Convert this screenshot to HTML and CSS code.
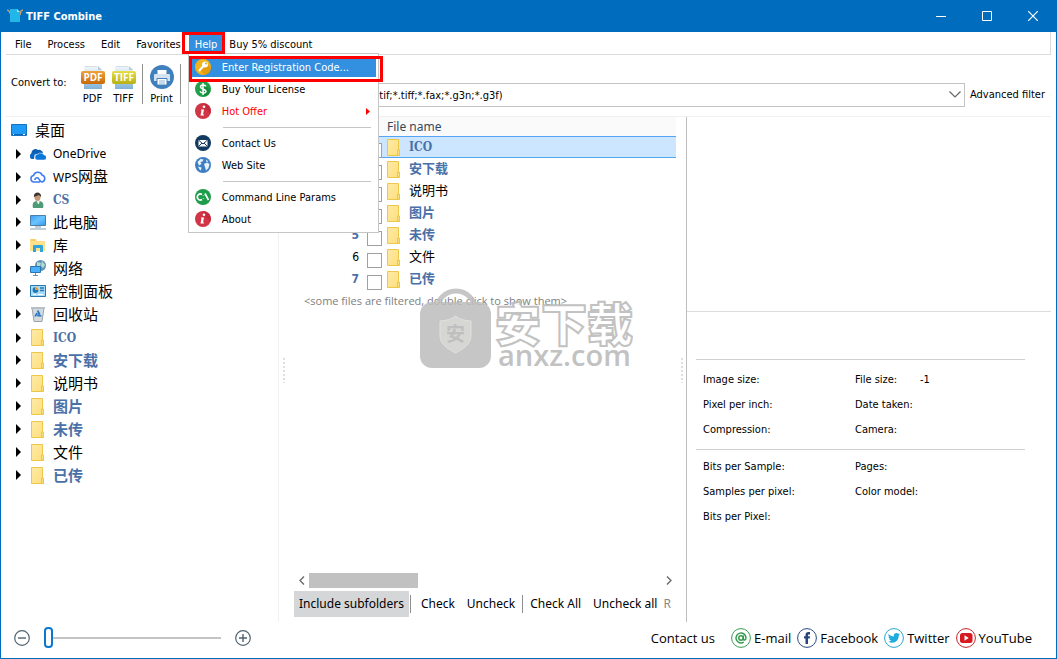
FILE: index.html
```
<!DOCTYPE html>
<html lang="en">
<head>
<meta charset="utf-8">
<title>TIFF Combine</title>
<link rel="stylesheet" href="styles.css">
</head>
<body>
<svg class="defs" aria-hidden="true">
  <defs>
    <linearGradient id="g-folder" x1="0" y1="0" x2="1" y2="1"><stop offset="0" stop-color="#ffeaa6"/><stop offset="1" stop-color="#fddf7c"/></linearGradient>
    <linearGradient id="g-screen" x1="0" y1="0" x2="1" y2="1"><stop offset="0" stop-color="#3a9cf5"/><stop offset=".5" stop-color="#6cc4ff"/><stop offset="1" stop-color="#2f98ee"/></linearGradient>
    <linearGradient id="g-orange" x1="0" y1="0" x2="0" y2="1"><stop offset="0" stop-color="#f0a13a"/><stop offset="1" stop-color="#c86a08"/></linearGradient>
    <linearGradient id="g-yellow" x1="0" y1="0" x2="0" y2="1"><stop offset="0" stop-color="#e6de4a"/><stop offset="1" stop-color="#b9b014"/></linearGradient>
    <linearGradient id="g-page" x1="0" y1="0" x2="0" y2="1"><stop offset="0" stop-color="#f4f8fb"/><stop offset="1" stop-color="#7fb2d6"/></linearGradient>
    <symbol id="folder" viewBox="0 0 14 17"><path d="M.5.5h11v12h1v4H.5z" fill="url(#g-folder)" stroke="#ecc748"/><path d="M10.500 16v-5h2v5z" fill="#fbe07e" stroke="#ecc748"/></symbol>
    <symbol id="info" viewBox="0 0 16 16"><circle cx="8" cy="8" r="8" fill="#d23545"/><path d="M8 0a8 8 0 0 1 7.500 10.500L8.500 4z" fill="#b92536" opacity=".6"/><circle cx="9" cy="3.800" r="1.300" fill="#fff"/><path d="M6 6.500h3l-1 5h1v1H5.500l1-5H6z" fill="#fff"/></symbol>
  </defs>
</svg>
<div class="window">
  <header class="titlebar">
    <svg class="app-icon" width="16" height="16" viewBox="0 0 16 16"><path d="M0 2l2 1 2 4M16 2l-2 1-1 4" stroke="#c79a6a" stroke-width="1.500" fill="none"/><path d="M3 1h7l3 3v10H3z" fill="#22b7e8"/><path d="M10 1v3h3z" fill="#a6e6fa"/></svg>
    <h1 class="title">TIFF Combine</h1>
    <div class="window-buttons">
      <button class="window-button" aria-label="Minimize"><svg width="10" height="10"><path d="M0 5.500h10" stroke="#fff"/></svg></button>
      <button class="window-button" aria-label="Maximize"><svg width="10" height="10"><path d="M.5.5h9v9h-9z" stroke="#fff" fill="none"/></svg></button>
      <button class="window-button" aria-label="Close"><svg width="10" height="10"><path d="M0 0l10 10M10 0L0 10" stroke="#fff" stroke-width="1.200"/></svg></button>
    </div>
  </header>

  <nav class="menubar">
    <button class="menu-title">File</button>
    <button class="menu-title">Process</button>
    <button class="menu-title">Edit</button>
    <button class="menu-title">Favorites</button>
    <div class="help">
      <button class="menu-title menu-open">Help</button>
      <div class="help-menu">
        <button class="menu-item menu-item-active"><svg class="item-icon" viewBox="0 0 16 16"><circle cx="8" cy="8" r="8" fill="#f3b31b"/><path d="M12 4l4 5a8 8 0 0 1-6 7l-5-5z" fill="#dc9609" opacity=".7"/><circle cx="10" cy="5.500" r="3" fill="#fff"/><circle cx="11" cy="4.500" r="1" fill="#e6a50f"/><path d="M8.500 7L4 12" stroke="#fff" stroke-width="2"/></svg><span>Enter Registration Code...</span></button>
        <button class="menu-item"><svg class="item-icon" viewBox="0 0 16 16"><circle cx="8" cy="8" r="8" fill="#20a04a"/><path d="M11 4l4.500 6a8 8 0 0 1-6 5.500l-4-4z" fill="#0f8036" opacity=".6"/><path d="M11 5.500C10 3.500 5.500 3.600 5.500 6S11 8 11 10.200 6 12.600 5 10.300M8 2v12" stroke="#fff" stroke-width="1.500" fill="none"/></svg><span>Buy Your License</span></button>
        <button class="menu-item menu-item-hot"><svg class="item-icon"><use href="#info"/></svg><span>Hot Offer</span><svg class="submenu-arrow" width="4" height="7"><path d="M0 0l4 3.500L0 7z" fill="#f00"/></svg></button>
        <hr class="menu-line">
        <button class="menu-item"><svg class="item-icon" viewBox="0 0 16 16"><circle cx="8" cy="8" r="8" fill="#12395f"/><path d="M3.500 5h9v6.500h-9z" fill="#fff"/><path d="M3.500 5L8 9l4.500-4M3.500 11.500L7 8M12.500 11.500L9 8" stroke="#12395f" fill="none"/></svg><span>Contact Us</span></button>
        <button class="menu-item"><svg class="item-icon" viewBox="0 0 16 16"><circle cx="8" cy="8" r="8" fill="#3d7fc4"/><path d="M2.500 5l3-3 3 .5-1 2-2 .5 1 2-2.500 1.500zM9 7l3-1.500 2.500 1.500-1 4-2.500 2.500-1-3.500zM11 2.500l2.500 2-2 .5zM3 9.500l3.500 1-.5 3-1.500-1z" fill="#e8f2fb"/></svg><span>Web Site</span></button>
        <hr class="menu-line">
        <button class="menu-item"><svg class="item-icon" viewBox="0 0 16 16"><circle cx="8" cy="8" r="8" fill="#1d9c49"/><path d="M7 5.500A3 3 0 1 0 7 10.500M8.500 6.500v.5M8.500 9.500v.5M10 4.500l3.500 6.500" stroke="#fff" stroke-width="1.600" fill="none"/></svg><span>Command Line Params</span></button>
        <button class="menu-item"><svg class="item-icon"><use href="#info"/></svg><span>About</span></button>
      </div>
      <div class="mark mark-title"></div>
      <div class="mark mark-item"></div>
    </div>
    <button class="menu-title menu-after">Buy 5% discount</button>
  </nav>

  <div class="toolbar">
    <span class="convert-label">Convert to:</span>
    <button class="tool"><svg width="24" height="26" viewBox="0 0 24 26"><path d="M3 1h14l4 4v19H3z" fill="url(#g-page)"/><path d="M17 1v4h4z" fill="#b8cedd"/><path d="M4 1.500h12" stroke="#d5dde2" /><rect y="6" width="24" height="13" rx="2" fill="url(#g-orange)"/><text class="badge-text" x="12" y="16">PDF</text></svg>PDF</button>
    <button class="tool"><svg width="24" height="26" viewBox="0 0 24 26"><path d="M3 1h14l4 4v19H3z" fill="url(#g-page)"/><path d="M17 1v4h4z" fill="#b8cedd"/><path d="M4 1.500h12" stroke="#d5dde2" /><rect y="6" width="24" height="13" rx="2" fill="url(#g-yellow)"/><text class="badge-text" x="12" y="16">TIFF</text></svg>TIFF</button>
    <span class="tool-line"></span>
    <button class="tool"><svg width="24" height="26" viewBox="0 0 24 26"><circle cx="12" cy="12" r="12" fill="#4080bd"/><path d="M7.500 5h9v5h-9z" fill="#fff"/><path d="M5 9h14a1 1 0 0 1 1 1v6H4v-6a1 1 0 0 1 1-1z" fill="#d5e3f0"/><path d="M7 13.500h10V20H7z" fill="#fff" stroke="#4080bd"/><path d="M9 16h6M9 18h6" stroke="#8fb2d6"/></svg>Print</button>
    <span class="tool-line"></span>
    <select class="filter" aria-label="File filter"><option>All supported files (*.tif;*.tiff;*.fax;*.g3n;*.g3f)</option></select>
    <button class="advanced">Advanced filter</button>
  </div>

  <main class="content">
    <aside class="tree">
      <div class="tree-root"><svg width="16" height="14" viewBox="0 0 16 14"><path d="M.5 1.500h15v11H.5z" fill="#1e9bf7" stroke="#1672c0"/><path d="M1 11.500h14" stroke="#0d63b5"/><path d="M2 11.500h1M12 11.500h2" stroke="#fff"/></svg>桌面</div>
      <div class="tree-row latin"><i class="arrow"></i><svg width="16" height="16" viewBox="0 0 16 16"><path d="M2 9a4 4 0 0 1 6-5 4 4 0 0 1 5 3" fill="#0a5fb4"/><path d="M0 11a3 3 0 0 1 3-4l2-1-1 7H2a2 2 0 0 1-2-2z" fill="#0a66c0"/><path d="M5 11a3 3 0 0 1 3-3 4 4 0 0 1 6 1 2 2 0 0 1 0 5H7a2.500 2.500 0 0 1-2-3z" fill="#0a78d8" stroke="#fff" stroke-width=".5"/></svg>OneDrive</div>
      <div class="tree-row latin"><i class="arrow"></i><svg width="16" height="16" viewBox="0 0 16 16"><path d="M10 13H4a3.300 3.300 0 0 1-.5-6.500A4.500 4.500 0 0 1 12 6a3.600 3.600 0 0 1 0 7c-2 0-2-2-4-4a2 2 0 0 0-3 2" fill="none" stroke="#3d7df0" stroke-width="1.600"/></svg><span>WPS<span class="han">网盘</span></span></div>
      <div class="tree-row slab"><i class="arrow"></i><svg width="16" height="16" viewBox="0 0 16 16"><path d="M3 16c-1-4 0-6 3-7h4c3 1 4 3 3 7z" fill="#4e9b77"/><path d="M6 8h4l-1 4H8z" fill="#e8f1ee"/><ellipse cx="7.500" cy="5" rx="3" ry="4" fill="#c99872"/><path d="M4 5c-1-6 8-6 7 0L9 3z" fill="#3e3630"/></svg>CS</div>
      <div class="tree-row"><i class="arrow"></i><svg width="16" height="16" viewBox="0 0 16 16"><path d="M.5 1.500h15v10H.5z" fill="url(#g-screen)" stroke="#4a7fa8"/><path d="M5 13h6M0 15h16" stroke="#7f9db5" stroke-width="1.200"/></svg>此电脑</div>
      <div class="tree-row"><i class="arrow"></i><svg width="16" height="16" viewBox="0 0 16 16"><path d="M0 2h6l1 2h8v10H0z" fill="#ffe08a"/><path d="M1 3h4" stroke="#e9b84a"/><path d="M3 15V9a1 1 0 0 1 1-1h8a1 1 0 0 1 1 1v6h-3v-4H6v4z" fill="#32a4dc"/></svg>库</div>
      <div class="tree-row"><i class="arrow"></i><svg width="16" height="16" viewBox="0 0 16 16"><circle cx="10.500" cy="5.500" r="5.500" fill="#5f94b8"/><path d="M7 2l4 1-1 3-3 1zM12 1l3 4-2 3-2-2z" fill="#b4dbd0"/><path d="M.5 6.500h10v6H.5z" fill="#48b0fa" stroke="#2c76ad"/><path d="M3 15.500h5M5.500 13v2" stroke="#6990ad"/></svg>网络</div>
      <div class="tree-row"><i class="arrow"></i><svg width="16" height="16" viewBox="0 0 16 16"><path d="M.5 2.500h15v11H.5z" fill="#a8dcfb" stroke="#2878ac"/><circle cx="5.500" cy="7" r="3" fill="#fff"/><path d="M5.500 4v3h3a3 3 0 1 1-3-3z" fill="#1879bd"/><path d="M5.500 7V4a3 3 0 0 1 3 3z" fill="#f49420"/><path d="M10 5h4M10 7.500h4" stroke="#2678ae" stroke-width="1.500"/><path d="M3 11.500h3M8 11.500h5" stroke="#fff"/></svg>控制面板</div>
      <div class="tree-row"><i class="arrow"></i><svg width="16" height="16" viewBox="0 0 16 16"><path d="M2 2h12l-2 13.500H4z" fill="#d4d9dd" stroke="#9ca4aa"/><path d="M1 2h14" stroke="#b9c0c5" stroke-width="2"/><path d="M8 5.500l2.300 4H5.700z" stroke="#2276c9" stroke-width="1.800" stroke-dasharray="3.200 1.200" fill="none"/></svg>回收站</div>
      <div class="tree-row slab"><i class="arrow"></i><svg width="16" height="17"><use href="#folder"/></svg>ICO</div>
      <div class="tree-row mine"><i class="arrow"></i><svg width="16" height="17"><use href="#folder"/></svg>安下载</div>
      <div class="tree-row"><i class="arrow"></i><svg width="16" height="17"><use href="#folder"/></svg>说明书</div>
      <div class="tree-row mine"><i class="arrow"></i><svg width="16" height="17"><use href="#folder"/></svg>图片</div>
      <div class="tree-row mine"><i class="arrow"></i><svg width="16" height="17"><use href="#folder"/></svg>未传</div>
      <div class="tree-row"><i class="arrow"></i><svg width="16" height="17"><use href="#folder"/></svg>文件</div>
      <div class="tree-row mine"><i class="arrow"></i><svg width="16" height="17"><use href="#folder"/></svg>已传</div>
    </aside>

    <section class="files">
      <span class="grip"></span>
      <div class="file-pane">
        <table class="file-table">
          <thead><tr><th class="col-number"></th><th class="col-check"></th><th>File name</th></tr></thead>
          <tbody>
            <tr class="selected mine"><td class="col-number">1</td><td class="col-check"><input type="checkbox" aria-label="ICO"></td><td><div class="file-name slab"><svg width="14" height="17"><use href="#folder"/></svg>ICO</div></td></tr>
            <tr class="mine"><td class="col-number">2</td><td class="col-check"><input type="checkbox" aria-label="安下载"></td><td><div class="file-name"><svg width="14" height="17"><use href="#folder"/></svg>安下载</div></td></tr>
            <tr><td class="col-number">3</td><td class="col-check"><input type="checkbox" aria-label="说明书"></td><td><div class="file-name"><svg width="14" height="17"><use href="#folder"/></svg>说明书</div></td></tr>
            <tr class="mine"><td class="col-number">4</td><td class="col-check"><input type="checkbox" aria-label="图片"></td><td><div class="file-name"><svg width="14" height="17"><use href="#folder"/></svg>图片</div></td></tr>
            <tr class="mine"><td class="col-number">5</td><td class="col-check"><input type="checkbox" aria-label="未传"></td><td><div class="file-name"><svg width="14" height="17"><use href="#folder"/></svg>未传</div></td></tr>
            <tr><td class="col-number">6</td><td class="col-check"><input type="checkbox" aria-label="文件"></td><td><div class="file-name"><svg width="14" height="17"><use href="#folder"/></svg>文件</div></td></tr>
            <tr class="mine"><td class="col-number">7</td><td class="col-check"><input type="checkbox" aria-label="已传"></td><td><div class="file-name"><svg width="14" height="17"><use href="#folder"/></svg>已传</div></td></tr>
          </tbody>
        </table>
        <p class="filtered">&lt;some files are filtered, double click to show them&gt;</p>
        <div class="scrollbar">
          <button class="scroll-arrow" aria-label="Scroll left"><svg width="6" height="9"><path d="M5 .5l-4 4 4 4" fill="none" stroke="#666" stroke-width="1.300"/></svg></button>
          <div class="scroll-track"><div class="scroll-thumb"></div></div>
          <button class="scroll-arrow" aria-label="Scroll right"><svg width="6" height="9"><path d="M1 .5l4 4-4 4" fill="none" stroke="#666" stroke-width="1.300"/></svg></button>
        </div>
        <div class="actions">
          <button class="action action-on">Include subfolders</button>
          <span class="action-line"></span>
          <button class="action action-check">Check</button>
          <button class="action">Uncheck</button>
          <span class="action-line"></span>
          <button class="action">Check All</button>
          <button class="action">Uncheck all</button>
          <button class="action action-faded">R</button>
        </div>
      </div>
      <span class="grip grip-right"></span>
      <div class="watermark">
        <svg width="72" height="82" viewBox="0 0 72 82"><path d="M17 22a19 19 0 0 1 38 0" fill="none" stroke="#bdbdbd" stroke-width="5"/><rect x="0" y="14" width="71" height="66" rx="12" fill="#bdbdbd"/><path d="M35.500 28c5 4 10 4.500 15.500 5v15c0 8-8 13-15.500 17C28 61 20 56 20 48V33c5.500-.5 10.500-1 15.500-5z" fill="#cfcfcd" stroke="#dcdcda"/><text class="shield-text" x="35.500" y="53">安</text></svg>
        <div class="watermark-words"><span class="watermark-han">安下载</span><span class="watermark-site">anxz.com</span></div>
      </div>
    </section>

    <section class="details">
      <div class="preview"></div>
      <dl class="facts">
        <div class="fact"><dt>Image size:</dt><dd></dd></div><div class="fact"><dt>File size:</dt><dd>-1</dd></div>
        <div class="fact"><dt>Pixel per inch:</dt><dd></dd></div><div class="fact"><dt>Date taken:</dt><dd></dd></div>
        <div class="fact"><dt>Compression:</dt><dd></dd></div><div class="fact"><dt>Camera:</dt><dd></dd></div>
      </dl>
      <dl class="facts facts-more">
        <div class="fact"><dt>Bits per Sample:</dt><dd></dd></div><div class="fact"><dt>Pages:</dt><dd></dd></div>
        <div class="fact"><dt>Samples per pixel:</dt><dd></dd></div><div class="fact"><dt>Color model:</dt><dd></dd></div>
        <div class="fact"><dt>Bits per Pixel:</dt><dd></dd></div>
      </dl>
    </section>
  </main>

  <footer class="footer">
    <div class="zoom">
      <button class="zoom-button" aria-label="Smaller"><svg width="16" height="16"><circle cx="8" cy="8" r="7.300" fill="none" stroke="#4e626f" stroke-width="1.200"/><path d="M4 8h8" stroke="#4e626f" stroke-width="1.400"/></svg></button>
      <input class="zoom-range" type="range" min="0" max="100" value="0" aria-label="Thumbnail size">
      <button class="zoom-button" aria-label="Larger"><svg width="16" height="16"><circle cx="8" cy="8" r="7.300" fill="none" stroke="#4e626f" stroke-width="1.200"/><path d="M4 8h8M8 4v8" stroke="#4e626f" stroke-width="1.400"/></svg></button>
    </div>
    <div class="contacts">
      <span class="contact-label">Contact us</span>
      <a class="contact" href="#email"><svg width="20" height="20" viewBox="0 0 20 20"><circle cx="10" cy="10" r="9.400" fill="#fff" stroke="#3a9c52"/><circle cx="10" cy="10" r="2.200" fill="none" stroke="#35994d" stroke-width="1.500"/><path d="M12.400 7.500v3.500c0 1.800 2.600 1.200 2.600-1a5 5 0 1 0-2.300 4.200" fill="none" stroke="#35994d" stroke-width="1.400"/></svg>E-mail</a>
      <a class="contact" href="#facebook"><svg width="20" height="20" viewBox="0 0 20 20"><circle cx="10" cy="10" r="9.400" fill="#fff" stroke="#2b4a80"/><path d="M8.500 16v-5.500H7V8.200h1.500V7c0-2 1-3 2.800-3H13v2.400h-1c-.8 0-1 .3-1 1v.8h2l-.3 2.300H11V16z" fill="#27457c"/></svg>Facebook</a>
      <a class="contact" href="#twitter"><svg width="20" height="20" viewBox="0 0 20 20"><circle cx="10" cy="10" r="9.400" fill="#fff" stroke="#25a4cf"/><path d="M4.500 6c1.500 1.600 3 2.300 5.300 2.400C9.500 6 11 5 12.400 5c.8 0 1.400.3 1.900.8l1.500-.5-1 1.400 1.200-.2-1.300 1.300c.1 4-3 7-6.500 7-1.500 0-2.800-.4-4-1.200 1.300 0 2.500-.3 3.300-1-1 0-1.900-.8-2.200-1.700h1C5.200 10.500 4.500 9.500 4.500 8.400l1 .3C4.500 7.900 4.100 7 4.500 6z" fill="#1eacdf"/></svg>Twitter</a>
      <a class="contact" href="#youtube"><svg width="20" height="20" viewBox="0 0 20 20"><circle cx="10" cy="10" r="9.400" fill="#fff" stroke="#c12228"/><rect x="4" y="5" width="12.500" height="10" rx="2.500" fill="#d81a20"/><path d="M8.500 7.300l4.200 2.700-4.200 2.700z" fill="#fff"/></svg>YouTube</a>
    </div>
  </footer>
</div>
</body>
</html>
```
FILE: styles.css
```
* { box-sizing: border-box; }

body {
  margin: 0;
  color: #000;
  background: #fff;
  font: 11px/16px "DejaVu Sans Condensed", "Noto Sans", "Noto Sans CJK SC", sans-serif;
}

button, select, input {
  margin: 0;
  padding: 0;
  border: 0;
  background: none;
  color: inherit;
  font: inherit;
}

svg { display: block; flex: none; }
.defs { position: absolute; width: 0; height: 0; }

.window {
  display: flex;
  flex-direction: column;
  min-height: 100vh;
  border: 1px solid #006cbe;
  border-top: 0;
}

/* Title bar */
.titlebar {
  display: flex;
  align-items: center;
  height: 32px;
  padding-left: 6px;
  gap: 3px;
  background: #006cbe;
  color: #fff;
}
.title { margin: 0; padding-top: 2px; font: bold 11px/30px "DejaVu Sans Condensed", sans-serif; }
.window-buttons { display: flex; margin-left: auto; }
.window-button {
  display: grid;
  place-items: center;
  width: 46px;
  height: 32px;
}

/* Menu bar */
.menubar {
  display: flex;
  height: 23px;
  margin: 0 5px;
  padding-left: 1px;
  border: 1px solid #dcdcdc;
  border-width: 0 1px 1px 0;
}
.menu-title { height: 23px; padding: 2px 8px 0; }
.menu-title.menu-after { padding-left: 6px; }
.help { position: relative; }
.menu-title.menu-open {
  height: 20px;
  margin: 2px 0 0;
  padding: 1px 6px 0;
  background: #338fe0;
  color: #fff;
}
.help-menu {
  position: absolute;
  z-index: 2;
  top: 21px;
  left: -1px;
  width: 191px;
  padding: 3px 2px 1px;
  border: 1px solid #c6c6c6;
  background: #fff;
}
.menu-item {
  display: flex;
  align-items: center;
  gap: 11px;
  width: 100%;
  height: 20px;
  margin-bottom: 2px;
  padding: 0 6px 0 4px;
}
.menu-item span { padding-top: 2px; }
.menu-item-active { background: #338fe0; color: #fff; }
.menu-item-hot { color: #f00; }
.item-icon { width: 16px; height: 16px; }
.submenu-arrow { margin-left: auto; }
.menu-line {
  height: 1px;
  margin: 6px 5px 5px 32px;
  border: 0;
  background: #c6c6c6;
}
.mark { position: absolute; z-index: 3; border: 3px solid #f00; }
.mark-title { top: 0; left: -7px; width: 43px; height: 22px; }
.mark-item { top: 24px; left: 0; width: 194px; height: 26px; }

/* Toolbar */
.toolbar {
  display: flex;
  align-items: center;
  height: 62px;
  margin: 0 5px;
  padding: 0 6px 0 5px;
  border-bottom: 1px solid #f0f0f0;
}
.convert-label { width: 66px; padding-bottom: 6px; }
.tool {
  display: flex;
  flex-direction: column;
  align-items: center;
  width: 31px;
}
.tool-line { width: 1px; height: 40px; margin: 0 3px 4px; background: #909090; }
.badge-text { fill: #fff; font: bold 10px "Open Sans", sans-serif; text-anchor: middle; }
.filter {
  flex: 1;
  height: 24px;
  margin: 18px 5px 0 44px;
  padding: 2px 26px 0 46px;
  border: 1px solid #c4c4c4;
  appearance: none;
  background: url("data:image/svg+xml,%3Csvg xmlns='http://www.w3.org/2000/svg' width='12' height='7'%3E%3Cpath d='M.5.5l5.500 5.500 5.500-5.500' fill='none' stroke='%23666' stroke-width='1.200'/%3E%3C/svg%3E") no-repeat right 3px center;
}
.advanced { margin-top: 19px; }

/* Three panes */
.content {
  display: grid;
  grid-template-columns: 278fr 407fr 370fr;
  flex: 1;
}
.tree {
  padding: 2px 10px;
  border-right: 1px solid #f0f0f0;
  font: 15px/22px "Noto Sans CJK SC", sans-serif;
}
.tree-root, .tree-row { display: flex; align-items: center; height: 23px; padding-bottom: 1px; }
.tree-root { gap: 8px; }
.tree-row { gap: 7px; padding-left: 5px; }
.tree-row.latin, .tree-row.slab { padding-bottom: 0; }
.latin { font: 12px/23px "Noto Sans", sans-serif; }
.han { font: 15px/22px "Noto Sans CJK SC", sans-serif; }
.arrow {
  border: 5px solid transparent;
  border-left: 5px solid #000;
  border-right: 0;
  margin-right: 2px;
}
.mine { color: #4a70a8; font-weight: bold; }
.slab { color: #4a70a8; font: bold 12px/20px "DejaVu Serif Condensed", "DejaVu Serif", serif; }

.files { position: relative; display: flex; min-width: 0; }
.grip {
  align-self: center;
  flex: none;
  width: 5px;
  height: 26px;
  margin: 0 7px 0 3px;
  background: radial-gradient(circle, #dedede 1px, transparent 1px) 0 0 / 4px 4px;
}
.grip-right { margin: 0 1px 0 4px; }
.file-pane { display: flex; flex: 1; flex-direction: column; min-width: 0; }
.file-table {
  width: 100%;
  border-collapse: collapse;
  table-layout: fixed;
}
.file-table th {
  height: 19px;
  padding: 0;
  background: #fafafa;
  color: #34495a;
  font: 12px/19px "Noto Sans", sans-serif;
  text-align: left;
}
.file-table td {
  height: 22px;
  padding: 0;
  font-size: 13px;
  line-height: 20px;
}
.file-table .col-number { width: 65px; font-size: 12px; text-align: right; }
.file-table .col-check { width: 28px; padding-left: 8px; vertical-align: bottom; }
.col-check input {
  display: block;
  width: 15px;
  height: 15px;
  border: 1px solid #a0a0a0;
  appearance: none;
  background: #fff;
}
.selected td { background: #cce6ff; box-shadow: inset 0 1px #55a5f5, inset 0 -1px #55a5f5; }
.file-name { display: flex; align-items: center; gap: 8px; }
.filtered { margin: 3px 0 0 10px; color: #808080; font-family: "Open Sans", sans-serif; }
.scrollbar { display: flex; height: 15px; margin-top: auto; }
.scroll-arrow { display: grid; place-items: center; width: 15px; }
.scroll-track { flex: 1; }
.scroll-thumb { width: 31%; height: 15px; background: #c1c1c1; }
.actions {
  display: flex;
  align-items: center;
  height: 26px;
  margin: 3px 0 5px;
  overflow: hidden;
  font: 12px/20px "Noto Sans", sans-serif;
  white-space: nowrap;
}
.action { flex: none; height: 26px; padding: 0 6px; }
.action-on { padding: 0 5px; background: #d5d6d8; }
.action-check { padding-left: 9px; }
.action-line { flex: none; width: 1px; height: 18px; margin: 0 1px; background: #909090; }
.action-faded { padding: 0; color: #888; }

.watermark {
  position: absolute;
  top: 171px;
  left: 141px;
  display: flex;
  gap: 3px;
  opacity: .85;
  pointer-events: none;
}
.watermark-words { display: flex; flex-direction: column; color: #b8b8b8; }
.watermark-han {
  margin-top: 9px;
  color: #fff;
  font: 900 46px/48px "Noto Sans CJK SC", sans-serif;
  -webkit-text-stroke: 2px #b8b8b8;
}
.watermark-site { padding-left: 3px; font: 600 29px/20px "Open Sans", sans-serif; }
.shield-text { fill: #b4b4b4; font: bold 19px "Noto Sans CJK SC", sans-serif; text-anchor: middle; }

.details { border-left: 1px solid #bdbdbd; }
.preview { height: 195px; margin-right: 5px; border-bottom: 1px solid #dcdcdc; }
.facts {
  display: grid;
  grid-template-columns: 152fr 170fr;
  margin: 47px 31px 0 9px;
  padding: 7px 0 7px 7px;
  border-top: 1px solid #d0d0d0;
}
.facts-more { margin-top: 0; padding-top: 4px; }
.fact { display: flex; height: 25px; line-height: 25px; }
.fact dt { min-width: 65px; }
.fact dd { margin: 0; }

/* Footer */
.footer {
  display: flex;
  align-items: center;
  justify-content: space-between;
  height: 36px;
  padding: 0 24px 5px 13px;
}
.zoom { display: flex; align-items: center; gap: 14px; }
.zoom-range { width: 177px; height: 22px; appearance: none; }
.zoom-range::-webkit-slider-runnable-track { height: 2px; background: #c4c4c4; }
.zoom-range::-webkit-slider-thumb {
  width: 9px;
  height: 21px;
  margin-top: -10px;
  border: 2px solid #0b78d0;
  border-radius: 4px;
  appearance: none;
  background: #fff;
}
.contacts { display: flex; align-items: center; gap: 6px; font: 13px/20px "Open Sans", sans-serif; }
.contact-label { margin-right: 10px; }
.contact { display: flex; align-items: center; gap: 3px; color: inherit; text-decoration: none; }
```
